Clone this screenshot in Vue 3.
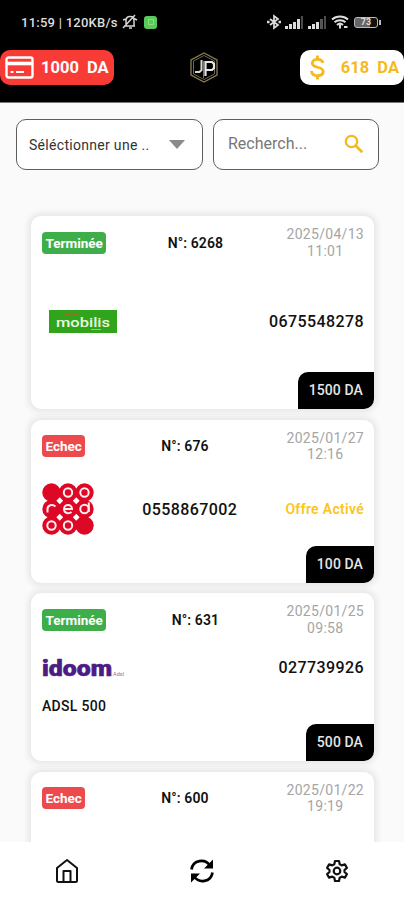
<template>
    <div class="screen">
        <header class="header">
            <div class="status">
                <span class="clock">11:59 | 120KB/s</span>
                <svg class="mute" width="18" height="16" viewBox="0 0 18 16" fill="none" stroke="#d5d5d5" stroke-width="1.5">
                    <path d="M3 12h11M5 11V7c0-3 2-4.500 4-4.500s4 1.500 4 4.500v5M8 14h3M2 14L14 1M12 4l4 2M2 6l3-1" />
                </svg>
                <span class="app-dot"><i></i></span>
                <div class="signals">
                    <svg width="14" height="16" viewBox="0 0 14 16" fill="none" stroke="#ddd" stroke-width="1.7">
                        <path d="M3 5l8 6-4 3V2l4 3-8 6" />
                        <path d="M0 8h2.500M11.500 8h2.500" stroke-width="2.500" />
                    </svg>
                    <svg v-for="n in 2" :key="n" width="19" height="13" viewBox="0 0 19 13" fill="#ddd">
                        <rect x="0" y="10" width="3" height="3" />
                        <rect x="4" y="8" width="3" height="5" />
                        <rect x="8" y="6" width="3" height="7" />
                        <rect x="12" y="3" width="3" height="10" :fill="n === 1 ? '#ddd' : '#555'" />
                        <rect x="16" y="0" width="2" height="13" fill="#4b4b4b" />
                    </svg>
                    <svg width="18" height="14" viewBox="0 0 18 14" fill="none" stroke="#ddd" stroke-width="2">
                        <path d="M1 4.500c4.500-4 11.500-4 16 0M3.500 7.300c3-2.800 8-2.800 11 0M6 10c2-1.800 4-1.800 6 0" />
                        <path d="M9 9.500v4M13 12h3.500" />
                    </svg>
                    <span class="battery">73</span>
                </div>
            </div>
            <div class="balances">
                <div class="pill red">
                    <svg width="29" height="23" viewBox="0 0 29 23" fill="none" stroke="#fff">
                        <rect x="1.500" y="1.500" width="26" height="20" rx="2" stroke-width="2.400" />
                        <path d="M2 7.500h25" stroke-width="3.600" />
                        <path d="M5.500 16h3M11 16h8" stroke-width="2" />
                    </svg>
                    <span>1000&nbsp; DA</span>
                </div>
                <svg class="brand" width="28" height="31" viewBox="0 0 28 31" fill="none">
                    <path d="M14 1L27 8v15l-13 7L1 23V8z" stroke="#8b7b51" stroke-width="1.300" />
                    <path d="M14 3.500L24.500 9v13L14 27.500 3.500 22V9z" stroke="#b4a888" stroke-width=".6" />
                    <path d="M5 20h4.500l2-2V8" stroke="#ddd7c6" stroke-width="2" />
                    <path d="M15.500 24V10h6.500l2 2v4l-2 2h-6" stroke="#e6e6e6" stroke-width="2.200" />
                    <path d="M13.500 9v17" stroke="#94743c" stroke-width="1" />
                </svg>
                <div class="pill white">
                    <svg width="15" height="25" viewBox="0 0 15 25" fill="none" stroke="#f6b91b" stroke-width="2.800">
                        <path d="M13 8C12.500 5.500 10.500 4.300 7.500 4.300S2.300 5.800 2.300 8.300c0 5.300 10.900 2.600 10.900 8.200 0 2.500-2.200 4.200-5.700 4.200s-5.800-1.700-6-4.700M7.500 0.500v4M7.500 20.500v4" />
                    </svg>
                    <span>618&nbsp; DA</span>
                </div>
            </div>
        </header>

        <main class="content">
            <div class="filters">
                <div class="field select">
                    <span>Séléctionner une ..</span>
                    <svg width="16" height="9" viewBox="0 0 16 9"><path d="M0 0h16L8 9z" fill="#8b8b8b" /></svg>
                </div>
                <div class="field search">
                    <span>Recherch...</span>
                    <svg width="20" height="20" viewBox="0 0 20 20" fill="none" stroke="#f6b91b" stroke-width="2.300">
                        <circle cx="7.500" cy="7.500" r="5.700" />
                        <path d="M11.800 11.800L18.300 18.300" stroke-width="2.700" />
                    </svg>
                </div>
            </div>

            <div class="orders">
                <article v-for="order in orders" :key="order.id" class="card" :class="order.provider">
                    <div class="card-head">
                        <span class="badge" :class="{ failed: order.status === 'Echec' }">{{ order.status }}</span>
                        <span class="number">N°: {{ order.id }}</span>
                        <span class="date">{{ order.day }}<br />{{ order.time }}</span>
                    </div>
                    <div v-if="order.phone" class="card-body">
                        <svg v-if="order.provider === 'mobilis'" class="logo" width="68" height="23" viewBox="0 0 68 23">
                            <rect width="68" height="23" fill="#30a51c" />
                            <path d="M15 5.500Q21 2.500 28 4.500" stroke="#a4662b" stroke-width="1.800" fill="none" />
                            <text x="7" y="16.500" textLength="54" lengthAdjust="spacingAndGlyphs" font-size="13" font-weight="500" fill="#eaf8df">mobilis</text>
                            <path d="M42 19.500h10" stroke="#8fd070" stroke-width="1" />
                        </svg>
                        <svg v-else-if="order.provider === 'ooredoo'" class="logo" width="52" height="52" viewBox="0 0 52 52">
                            <rect x="9" y="9" width="34" height="34" fill="#dc0825" />
                            <circle v-for="dot in dots" :key="dot.id" :cx="dot.x" :cy="dot.y" r="9.200" fill="#dc0825" />
                            <g fill="#fff">
                                <path v-for="gap in gaps" :key="gap.id" :d="`M${gap.x} ${gap.y - 3.400}l3.400 3.400-3.400 3.400-3.400-3.400z`" />
                            </g>
                            <g fill="none" stroke="#fff0f1" stroke-width="2">
                                <circle v-for="ring in rings" :key="ring.id" :cx="ring.x" :cy="ring.y" r="4.200" />
                                <path d="M5.500 29.500V26c0-4 5-5 8-2.500" />
                                <path d="M22 26h8c0-5.500-8-5.500-8 0 0 4.500 5 5 7.500 3" />
                                <circle cx="42.500" cy="26" r="4.200" />
                                <path d="M46.800 19.500V29" />
                            </g>
                        </svg>
                        <svg v-else class="logo" width="84" height="31" viewBox="0 0 84 31">
                            <text x="0" y="23.500" textLength="70" lengthAdjust="spacingAndGlyphs" font-size="22.500" font-weight="900" fill="#4d1b83" stroke="#4d1b83" stroke-width=".6" stroke-linejoin="round">idoom</text>
                            <text x="71" y="23.500" textLength="11" lengthAdjust="spacingAndGlyphs" font-size="5" fill="#8b729f">Adsl</text>
                        </svg>
                        <span class="phone">{{ order.phone }}</span>
                        <span v-if="order.note" class="note">{{ order.note }}</span>
                    </div>
                    <div v-if="order.offer" class="offer">{{ order.offer }}</div>
                    <div v-if="order.price" class="price">{{ order.price }} DA</div>
                </article>
            </div>
        </main>

        <nav class="nav">
            <a>
                <svg width="24" height="26" viewBox="0 0 24 26" fill="none" stroke="#111" stroke-width="2" stroke-linejoin="round">
                    <path d="M2 10L12 2l10 8v12.500q0 1.500-1.500 1.500h-17Q2 24 2 22.500z" />
                    <path d="M8.500 24V13h7v11" />
                </svg>
            </a>
            <a>
                <svg width="26" height="26" viewBox="0 0 26 26" fill="none" stroke="#000" stroke-width="2.700">
                    <path d="M2.500 11.500C4 1.500 16 .5 21 7.500M23.500 14.500C22 24.500 10 25.500 5 18.500" />
                    <path d="M24 1.500v9h-9zM2 24.500v-9h9z" fill="#000" stroke="none" />
                </svg>
            </a>
            <a>
                <svg width="24" height="24" viewBox="0 0 24 24" fill="none" stroke="#111" stroke-width="2.200" stroke-linejoin="round">
                    <path d="M10 2h4l.7 3.200 2.100 1.200 3.100-1 2 3.500-2.400 2.100v2l2.400 2.100-2 3.500-3.100-1-2.100 1.200L14 22h-4l-.7-3.200-2.100-1.200-3.100 1-2-3.500L4.500 13v-2L2.100 8.900l2-3.500 3.100 1 2.100-1.200z" />
                    <circle cx="12" cy="12" r="3.300" />
                </svg>
            </a>
        </nav>
    </div>
</template>

<script setup>
const orders = [
    { id: 6268, status: 'Terminée', day: '2025/04/13', time: '11:01', provider: 'mobilis', phone: '0675548278', price: 1500 },
    { id: 676, status: 'Echec', day: '2025/01/27', time: '12:16', provider: 'ooredoo', phone: '0558867002', note: 'Offre Activé', price: 100 },
    { id: 631, status: 'Terminée', day: '2025/01/25', time: '09:58', provider: 'idoom', phone: '027739926', offer: 'ADSL 500', price: 500 },
    { id: 600, status: 'Echec', day: '2025/01/22', time: '19:19', provider: 'pending' },
];

// 3x3 grid of the ooredoo logo
const dots = Array.from({ length: 9 }, (_, i) => ({
    id: i,
    x: 9.5 + (i % 3) * 16.5,
    y: 9.5 + Math.floor(i / 3) * 16.5,
}));
const rings = dots.filter((dot) => [1, 2, 6, 7].includes(dot.id));
const gaps = [0, 1, 3, 4].map((i) => ({ id: i, x: dots[i].x + 8.25, y: dots[i].y + 8.25 }));
</script>

<style>
    body{
        margin:0;
    }
</style>

<style scoped>
    .screen{
        width:404px;
        height:900px;
        display:flex;
        flex-direction:column;
        overflow:hidden;
        background:#fafafa;
        color:#111;
        font-family:Roboto, "Liberation Sans", sans-serif;
    }

    svg{
        display:block;
        flex-shrink:0;
    }

    .header{
        height:103px;
        flex-shrink:0;
        background:#000;
        border-bottom:1px solid #777;
        box-sizing:border-box;
    }

    .status{
        height:50px;
        box-sizing:border-box;
        padding:6px 24px 12px 21px;
        display:flex;
        align-items:center;
        color:#ddd;
    }

    .clock{
        width:98px;
        font-size:13px;
        font-weight:500;
        letter-spacing:0.25px;
        white-space:nowrap;
    }

    .mute{
        margin-left:2px;
    }

    .app-dot{
        width:13px;
        height:13px;
        margin-left:5px;
        border-radius:3px;
        background:#58c95a;
        display:flex;
        align-items:center;
        justify-content:center;
    }

    .app-dot i{
        width:4px;
        height:4px;
        border:1px solid #82df80;
    }

    .signals{
        margin-left:auto;
        display:flex;
        align-items:center;
        gap:4px;
    }

    .battery{
        position:relative;
        width:24px;
        height:11px;
        box-sizing:border-box;
        margin:0 2px 0 1px;
        border:1.5px solid #bbb;
        border-radius:3px;
        background:linear-gradient(90deg, #666 70%, #111 70%);
        font-size:9px;
        font-weight:700;
        line-height:9px;
        text-align:center;
    }

    .battery::after{
        content:"";
        position:absolute;
        right:-4px;
        top:2px;
        width:2px;
        height:5px;
        background:#bbb;
    }

    .balances{
        display:flex;
        justify-content:space-between;
        align-items:center;
    }

    .pill{
        height:35px;
        box-sizing:border-box;
        display:flex;
        align-items:center;
        border-radius:10px;
        font-size:16.5px;
        font-weight:700;
        white-space:nowrap;
    }

    .red{
        width:114px;
        padding-left:5px;
        gap:7px;
        background:#f93b36;
        color:#fff;
    }

    .white{
        width:104px;
        padding:0 5px 0 10px;
        justify-content:space-between;
        background:#fff;
        color:#f6b91b;
    }

    .brand{
        margin-left:-3px;
        margin-right:3px;
    }

    .content{
        flex:1;
        min-height:0;
        overflow:hidden;
        padding-top:16px;
    }

    .filters{
        display:flex;
        gap:10px;
        padding:0 25px 0 16px;
    }

    .field{
        height:51px;
        box-sizing:border-box;
        border:1px solid #5e5e5e;
        border-radius:10px;
        background:#fff;
        display:flex;
        align-items:center;
        justify-content:space-between;
    }

    .select{
        width:187px;
        padding:0 17px 0 12px;
        font-size:14px;
        letter-spacing:0.3px;
        color:#333;
    }

    .search{
        flex:1;
        padding:0 14px 2px 14px;
        font-size:16px;
        color:#777;
    }

    .orders{
        display:flex;
        flex-direction:column;
        gap:10.5px;
        padding:46px 30px 0 31px;
    }

    .card{
        display:flex;
        flex-direction:column;
        flex-shrink:0;
        box-sizing:border-box;
        height:168px;
        padding:10px 10px 0 11px;
        border-radius:10px;
        background:#fff;
        box-shadow:0 0 6px 3px rgba(0, 0, 0, 0.08);
    }

    .card.mobilis{
        height:193px;
    }

    .card.ooredoo{
        height:163px;
    }

    .card-head{
        height:33px;
        display:flex;
        justify-content:space-between;
        align-items:center;
    }

    .badge{
        height:22px;
        box-sizing:border-box;
        padding:0 3.5px;
        border-radius:4px;
        background:#3dae49;
        color:#fff;
        font-size:13.5px;
        font-weight:700;
        line-height:22px;
    }

    .failed{
        background:#ec4a4d;
    }

    .number{
        margin-left:-2px;
        font-size:14px;
        font-weight:600;
        letter-spacing:0.1px;
    }

    .date{
        font-size:14px;
        line-height:16.5px;
        letter-spacing:0.3px;
        text-align:center;
        color:#a5a5a5;
    }

    .card-body{
        display:flex;
        justify-content:space-between;
        align-items:center;
    }

    .mobilis .card-body{
        margin-top:51px;
        padding-left:7px;
    }

    .ooredoo .card-body{
        margin-top:20.5px;
    }

    .idoom .card-body{
        margin-top:21px;
        height:21px;
    }

    .phone{
        font-size:16px;
        font-weight:500;
        letter-spacing:0.4px;
    }

    .note{
        font-size:14px;
        font-weight:600;
        letter-spacing:0.3px;
        color:#fdc51b;
    }

    .offer{
        margin-top:18px;
        font-size:14px;
        font-weight:500;
        line-height:20px;
        letter-spacing:0.3px;
    }

    .price{
        align-self:flex-end;
        height:37px;
        margin-top:auto;
        margin-right:-10px;
        padding:0 11px;
        border-radius:10px 0 10px 0;
        background:#000;
        color:#e5e5e5;
        font-size:14px;
        font-weight:500;
        letter-spacing:0.1px;
        line-height:37px;
    }

    .nav{
        height:58px;
        flex-shrink:0;
        display:flex;
        align-items:center;
        background:#fff;
    }

    .nav a{
        flex:1;
        display:flex;
        justify-content:center;
    }
</style>
